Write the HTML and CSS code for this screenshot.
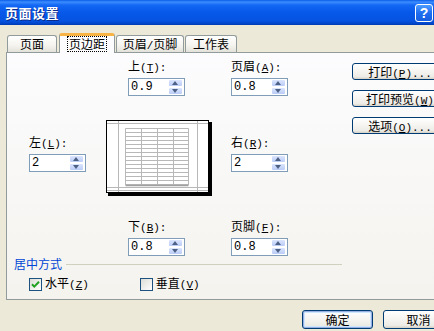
FILE: index.html
```html
<!DOCTYPE html>
<html lang="zh-CN">
<head>
  <meta charset="UTF-8" />
  <title>页面设置</title>
  <link rel="stylesheet" href="styles.css">
</head>
<body>

<div class="dialog">
  <div class="titlebar">
    <span class="title">页面设置</span>
    <span class="help">?</span>
  </div>

  <div class="tabs">
    <div class="tab t1">页面</div>
    <div class="tab t2 active"><span class="focus">页边距</span></div>
    <div class="tab t3">页眉<span class="hw">/</span>页脚</div>
    <div class="tab t4">工作表</div>
  </div>

  <div class="panel">
    <div class="margins">
      <div class="field f-top">
        <label>上<span class="hw">(<u>T</u>):</span></label>
        <div class="spinbox"><span class="val">0.9</span><span class="spin"><i class="up"></i><i class="dn"></i></span></div>
      </div>
      <div class="field f-header">
        <label>页眉<span class="hw">(<u>A</u>):</span></label>
        <div class="spinbox"><span class="val">0.8</span><span class="spin"><i class="up"></i><i class="dn"></i></span></div>
      </div>

      <div class="side-buttons">
        <button class="btn">打印<span class="hw">(<u>P</u>)...</span></button>
        <button class="btn">打印预览<span class="hw">(<u>W</u>)</span></button>
        <button class="btn">选项<span class="hw">(<u>O</u>)...</span></button>
      </div>

      <div class="field f-left">
        <label>左<span class="hw">(<u>L</u>):</span></label>
        <div class="spinbox"><span class="val">2</span><span class="spin"><i class="up"></i><i class="dn"></i></span></div>
      </div>

      <svg class="preview" width="106" height="76" viewBox="0 0 106 76">
        <rect x="2" y="2" width="104" height="74" fill="#000"/>
        <rect x="0.5" y="0.5" width="102" height="72" fill="#fff" stroke="#000"/>
        <g stroke="#b8b8b8" fill="none">
          <path d="M1 3.5H102M1 67.5H102M1 70.5H102M12.5 1V72M91.5 1V72"/>
          <path d="M19.5 8.5H82.5M19.5 12.5H82.5M19.5 16.5H82.5M19.5 20.5H82.5M19.5 24.5H82.5M19.5 28.5H82.5M19.5 32.5H82.5M19.5 36.5H82.5M19.5 40.5H82.5M19.5 44.5H82.5M19.5 48.5H82.5M19.5 52.5H82.5M19.5 56.5H82.5M19.5 60.5H82.5M19.5 64.5H82.5"/>
          <path d="M19.5 8.5V65M35.5 8.5V65M51.5 8.5V65M67.5 8.5V65M82.5 8.5V65"/>
          <path d="M19.5 65.5H82.5" stroke="#a0a0a0" stroke-width="1.5"/>
        </g>
      </svg>

      <div class="field f-right">
        <label>右<span class="hw">(<u>R</u>):</span></label>
        <div class="spinbox"><span class="val">2</span><span class="spin"><i class="up"></i><i class="dn"></i></span></div>
      </div>

      <div class="field f-bottom">
        <label>下<span class="hw">(<u>B</u>):</span></label>
        <div class="spinbox"><span class="val">0.8</span><span class="spin"><i class="up"></i><i class="dn"></i></span></div>
      </div>
      <div class="field f-footer">
        <label>页脚<span class="hw">(<u>F</u>):</span></label>
        <div class="spinbox"><span class="val">0.8</span><span class="spin"><i class="up"></i><i class="dn"></i></span></div>
      </div>
    </div>

    <div class="center-group">
      <div class="group-title"><span>居中方式</span><span class="rule"></span></div>
      <div class="checks">
        <label class="check c1">
          <span class="box"><svg width="11" height="11" viewBox="0 0 11 11"><path d="M2 5.2L4.3 7.6L9 2.8" fill="none" stroke="#21a121" stroke-width="2"/></svg></span>
          <span>水平<span class="hw">(<u>Z</u>)</span></span>
        </label>
        <label class="check c2">
          <span class="box"></span>
          <span>垂直<span class="hw">(<u>V</u>)</span></span>
        </label>
      </div>
    </div>
  </div>

  <div class="footer">
    <button class="btn btn-big default">确定</button>
    <button class="btn btn-big">取消</button>
  </div>
</div>

</body>
</html>
```

FILE: styles.css
```css
* { box-sizing: border-box; }
html, body {
  margin: 0;
  padding: 0;
  width: 434px;
  height: 331px;
  overflow: hidden;
  background: #ece9d8;
}
body {
  font-family: "Noto Sans CJK SC", "Liberation Sans", sans-serif;
  font-size: 12px;
  color: #000;
}
u { text-decoration: underline; text-underline-offset: 1px; }
.hw {
  font-family: "Liberation Mono", monospace;
  font-size: 11px;
}

.dialog {
  width: 436px;
  height: 331px;
  background: #ece9d8;
}

/* title bar */
.titlebar {
  height: 25px;
  display: flex;
  align-items: center;
  padding: 0 3px 0 5px;
  background: linear-gradient(#0a5de6 0, #3d8dff 2px, #1468f4 5px, #0759ea 12px, #0553e0 21px, #0042c4 24px, #003aae 25px);
}
.title {
  color: #fff;
  font-weight: bold;
  font-size: 13px;
  letter-spacing: 0.5px;
  text-shadow: 1px 1px 0 #0a2a8c;
}
.help {
  margin-left: auto;
  width: 18px;
  height: 18px;
  border: 1px solid #fff;
  border-radius: 3px;
  background: linear-gradient(#4d9cff, #1f6ef0 50%, #175ee0);
  color: #fff;
  font: bold 14px/16px "Liberation Sans", sans-serif;
  text-align: center;
}

/* tabs */
.tabs {
  display: flex;
  align-items: flex-start;
  height: 20px;
  margin-top: 8px;
  padding-left: 7px;
  position: relative;
  z-index: 1;
}
.tab {
  height: 17px;
  margin-top: 2px;
  border: 1px solid #919b9c;
  border-bottom: none;
  border-radius: 3px 3px 0 0;
  background: linear-gradient(#fff, #f4f3ee 60%, #e3e2da);
  text-align: center;
  line-height: 16px;
  white-space: nowrap;
}
.t1 { width: 50px; }
.t2 { width: 56px; margin-left: 2px; }
.t3 { width: 68px; margin-left: 1px; }
.t4 { width: 52px; margin-left: 1px; }
.tab.active {
  height: 20px;
  margin-top: 0;
  background: #fcfcfe;
  border-top: 3px solid #f7b445;
}
.focus {
  display: inline-block;
  padding: 0 1px;
  line-height: 14px;
  border: 1px dotted #000;
}

/* panel */
.panel {
  margin-left: 6px;
  margin-top: -1px;
  width: 460px;
  height: 248px;
  border: 1px solid #919b9c;
  background: linear-gradient(#fcfcfe, #f4f3ee);
}
.margins {
  display: grid;
  grid-template-columns: 77px 125px 121px 96px;
  grid-template-rows: 35px 75px 35px;
  row-gap: 25px;
  padding: 6px 0 0 22px;
}
.field label {
  display: block;
  line-height: 14px;
  white-space: nowrap;
}
.spinbox {
  margin-top: 3px;
  width: 57px;
  height: 18px;
  border: 1px solid #7f9db9;
  background: #fff;
  display: flex;
  align-items: center;
  padding: 0 1px 0 2px;
}
.val {
  font-family: "Liberation Mono", monospace;
  font-size: 12px;
  line-height: 16px;
}
.spin {
  margin-left: auto;
  width: 15px;
  height: 16px;
  display: flex;
  flex-direction: column;
}
.spin i {
  flex: 1;
  position: relative;
  border: 1px solid #fff;
  border-radius: 2px;
  background: linear-gradient(#dbe5fd, #b9cbf7);
}
.spin i::after {
  content: "";
  position: absolute;
  left: 3px;
  top: 1px;
  border-left: 3.5px solid transparent;
  border-right: 3.5px solid transparent;
}
.spin .up::after { border-bottom: 4px solid #4d6185; }
.spin .dn::after { border-top: 4px solid #4d6185; }

.f-top { grid-column: 2; grid-row: 1; margin-left: 22px; }
.f-header { grid-column: 3; grid-row: 1; }
.f-left { grid-column: 1; grid-row: 2; margin-top: 16px; }
.f-right { grid-column: 3; grid-row: 2; margin-top: 16px; }
.f-bottom { grid-column: 2; grid-row: 3; margin-left: 22px; }
.f-footer { grid-column: 3; grid-row: 3; }
.preview { grid-column: 2; grid-row: 2; margin-top: 1px; display: block; }

.side-buttons {
  grid-column: 4;
  grid-row: 1 / span 2;
  display: flex;
  flex-direction: column;
  gap: 10px;
  margin-top: 4px;
}

/* buttons */
.btn {
  font-family: "Noto Sans CJK SC", "Liberation Sans", sans-serif;
  font-size: 12px;
  color: #000;
  width: 96px;
  height: 17px;
  padding: 0;
  line-height: 15px;
  border: 1px solid #003c74;
  border-radius: 3px;
  background: linear-gradient(#fff, #f5f4f0 50%, #ecebe6 85%, #d6d0c5);
  white-space: nowrap;
}

/* centering group */
.center-group { padding: 3px 0 0 7px; }
.group-title {
  width: 328px;
  display: flex;
  align-items: center;
  line-height: 14px;
  color: #0046d5;
}
.rule {
  flex: 1;
  margin-left: 4px;
  height: 1px;
  background: #d0d0bf;
}
.checks {
  display: flex;
  margin-top: 5px;
  line-height: 14px;
}
.check {
  display: flex;
  align-items: center;
  gap: 3px;
}
.c1 { margin-left: 15px; }
.c2 { margin-left: 51px; }
.box {
  width: 13px;
  height: 13px;
  border: 1px solid #1c5180;
  background: linear-gradient(135deg, #dcdcd7, #fff);
  display: flex;
  align-items: center;
  justify-content: center;
}

/* footer */
.footer {
  display: flex;
  gap: 10px;
  padding-left: 302px;
  margin-top: 10px;
}
.btn-big {
  width: 71px;
  height: 19px;
  flex-shrink: 0;
  line-height: 17px;
}
.btn.default {
  box-shadow: inset 0 0 0 1px #97aee2, inset 0 0 0 2px #cee7ff;
}
```
